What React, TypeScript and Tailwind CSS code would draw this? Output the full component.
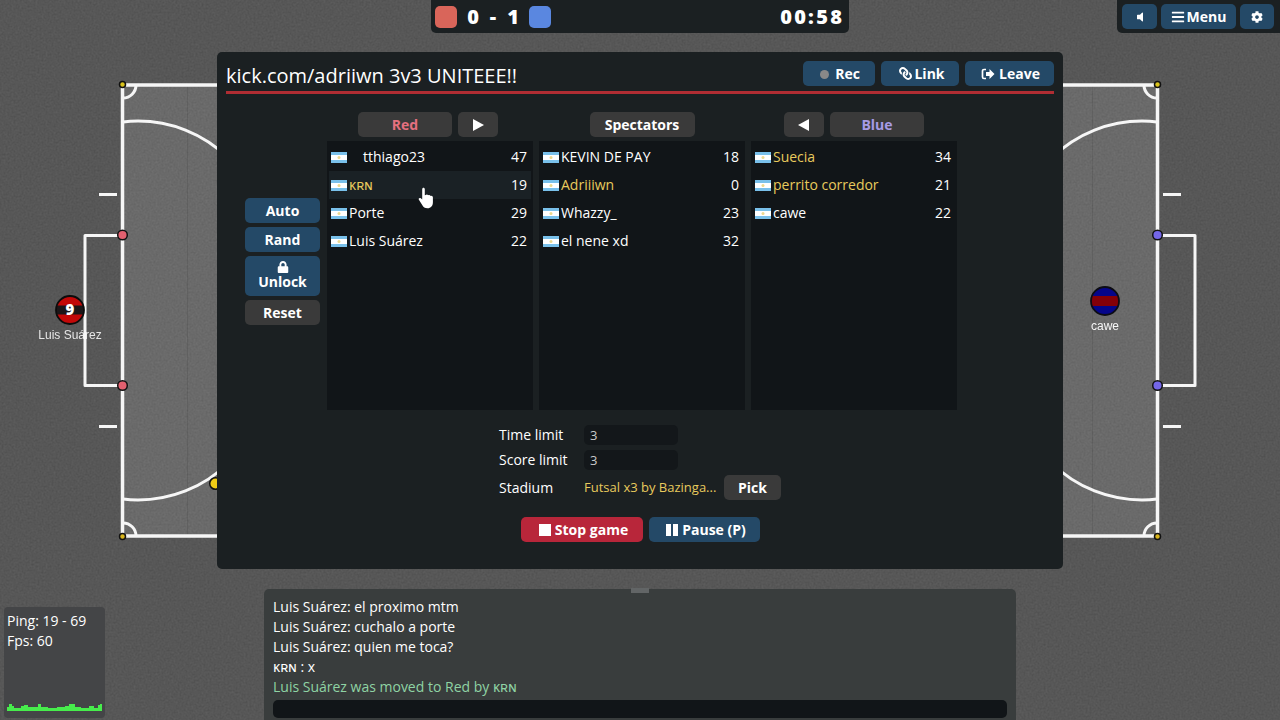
import { useState } from 'react'
import type { ReactNode } from 'react'
import { clsx } from 'clsx'
import { FaBars, FaCog, FaLink, FaLock, FaVolumeOff } from 'react-icons/fa'

interface Player {
  name: string
  ping: number
  admin?: boolean
  indent?: boolean
}

const redTeam: Player[] = [
  { name: 'tthiago23', ping: 47, indent: true },
  { name: 'ᴋʀɴ', ping: 19, admin: true },
  { name: 'Porte', ping: 29 },
  { name: 'Luis Suárez', ping: 22 },
]

const spectators: Player[] = [
  { name: 'KEVIN DE PAY', ping: 18 },
  { name: 'Adriiiwn', ping: 0, admin: true },
  { name: 'Whazzy_', ping: 23 },
  { name: 'el nene xd', ping: 32 },
]

const blueTeam: Player[] = [
  { name: 'Suecia', ping: 34, admin: true },
  { name: 'perrito corredor', ping: 21, admin: true },
  { name: 'cawe', ping: 22 },
]

const chatLines = [
  { text: 'Luis Suárez: el proximo mtm' },
  { text: 'Luis Suárez: cuchalo a porte' },
  { text: 'Luis Suárez: quien me toca?' },
  { text: 'ᴋʀɴ : x' },
  { text: 'Luis Suárez was moved to Red by ᴋʀɴ', notice: true },
]

const tones = {
  blue: 'bg-[#244967] text-white',
  gray: 'bg-[#3a3a3a] text-white',
  red: 'bg-[#b8263a] text-white',
  redTeam: 'bg-[#3a3a3a] text-[#e5707f]',
  blueTeam: 'bg-[#3a3a3a] text-[#a79be6]',
}

interface GameButtonProps {
  children: ReactNode
  tone?: keyof typeof tones
  className?: string
  label?: string
}

function GameButton({ children, tone = 'blue', className, label }: GameButtonProps) {
  return (
    <button
      type="button"
      aria-label={label}
      className={clsx(
        'flex min-h-[25px] items-center justify-center rounded-[5px] text-sm leading-[18px] font-bold whitespace-nowrap',
        tones[tone],
        className
      )}
    >
      {children}
    </button>
  )
}

function Flag() {
  return (
    <svg viewBox="0 0 16 11" className="h-[11px] w-4 shrink-0" aria-hidden="true">
      <rect width="16" height="11" fill="#79c0ea" />
      <rect y="3" width="16" height="5" fill="#fff" />
      <circle cx="8" cy="5.5" r="1.5" fill="#ecd98f" />
    </svg>
  )
}

function Pointer() {
  return (
    <svg viewBox="0 0 16 22" className="absolute top-4 left-[89px] z-10 h-[22px] w-4" aria-hidden="true">
      <path
        d="M4.2 2.2c0-2 2.6-2 2.6 0v6l.9-.2c.6-.9 2-.8 2.4.3.9-.7 2.1-.3 2.4.7 1.2-.5 2.4.3 2.4 1.6v4.600c0 3.600-2 6-5.400 6-2.700 0-4.100-1.100-5.300-3.200L.9 12.800c-.8-1.400.7-2.500 1.900-1.500l1.400 1.300z"
        fill="#fff"
      />
    </svg>
  )
}

function TeamList({ players, hovered }: { players: Player[]; hovered?: number }) {
  return (
    <ul className="h-[269px] bg-[#111518] px-0.5 pt-0.5">
      {players.map((player, i) => (
        <li
          key={player.name}
          className={clsx('relative flex h-7 items-center pr-1 pl-0.5', i === hovered && 'bg-[#1a2125]')}
        >
          <Flag />
          <span
            className={clsx(
              'flex-1',
              player.indent ? 'pl-4' : 'pl-0.5',
              player.admin ? 'text-[#e8ca5d]' : 'text-white'
            )}
          >
            {player.name}
          </span>
          <span>{player.ping}</span>
          {i === hovered && <Pointer />}
        </li>
      ))}
    </ul>
  )
}

function Pitch() {
  return (
    <svg
      viewBox="0 0 1280 720"
      preserveAspectRatio="xMidYMid slice"
      className="absolute inset-0 h-full w-full"
      aria-hidden="true"
    >
      <defs>
        <filter id="grain" x="0" y="0" width="100%" height="100%" colorInterpolationFilters="sRGB">
          <feTurbulence type="fractalNoise" baseFrequency="0.5" numOctaves="2" seed="4" />
          <feColorMatrix values="0.5 0.3 0 0 0 0.5 0.3 0 0 0 0.5 0.3 0 0 0 0 0 0 0 1" />
        </filter>
        <clipPath id="redDisc">
          <circle cx="70" cy="310" r="14" />
        </clipPath>
        <clipPath id="blueDisc">
          <circle cx="1105" cy="301" r="14" />
        </clipPath>
      </defs>

      <rect width="1280" height="720" fill="#555" />
      <rect x="122" y="85" width="1036" height="451" fill="#6b6b6b" />
      <path d="M187.5 86V535M1092.5 86V535" stroke="#606060" />
      <rect width="1280" height="720" filter="url(#grain)" opacity="0.12" />

      {/* lines */}
      <g fill="none" stroke="#f6f6f6" strokeWidth="3.5">
        <rect x="122.5" y="85" width="1035" height="451" />
        <path d="M136 85a13 13 0 0 1-13 13M1144 85a13 13 0 0 0 13 13M136 536a13 13 0 0 0-13-13M1144 536a13 13 0 0 1 13-13" strokeWidth="3" />
        <path d="M123 122Q130 121 138 121A129 129 0 0 1 267 250M123 499Q130 500 138 500A129 129 0 0 0 267 371" strokeWidth="3" />
        <path d="M1157 122Q1150 121 1142 121A129 129 0 0 0 1013 250M1157 499Q1150 500 1142 500A129 129 0 0 1 1013 371" strokeWidth="3" />
        <path d="M122 235.5H85V385.5H122M1158 235.5H1195V385.5H1158" strokeWidth="3" strokeLinejoin="round" />
        <path d="M99 194.5h18M99 426.5h18M1163 194.5h18M1163 426.5h18" strokeWidth="3" />
      </g>

      {/* posts, flags and ball */}
      <g stroke="#111" strokeWidth="1.5">
        <circle cx="122.5" cy="235" r="4.8" fill="#e2606f" />
        <circle cx="122.5" cy="385.5" r="4.8" fill="#e2606f" />
        <circle cx="1157.5" cy="235" r="4.8" fill="#7466e8" />
        <circle cx="1157.5" cy="385.5" r="4.8" fill="#7466e8" />
        <circle cx="122.5" cy="84.5" r="3" fill="#d9c21c" />
        <circle cx="1157.5" cy="84.5" r="3" fill="#d9c21c" />
        <circle cx="122.5" cy="536.5" r="3" fill="#d9b51c" />
        <circle cx="1157.5" cy="536.5" r="3" fill="#d9b51c" />
        <circle cx="215.5" cy="483.5" r="5.8" fill="#f0cb16" />
      </g>

      {/* players */}
      <g clipPath="url(#redDisc)">
        <rect x="56" y="296" width="28" height="28" fill="#c30808" />
        <rect x="56" y="305.5" width="28" height="9" fill="#1c1618" />
      </g>
      <circle cx="70" cy="310" r="14" fill="none" stroke="#0c0c0c" strokeWidth="1.8" />
      <g clipPath="url(#blueDisc)">
        <rect x="1091" y="287" width="28" height="28" fill="#05058a" />
        <rect x="1091" y="296" width="28" height="10" fill="#840008" />
      </g>
      <circle cx="1105" cy="301" r="14" fill="none" stroke="#0c0c14" strokeWidth="1.8" />
      <g textAnchor="middle" fill="#fff" fontFamily="'Liberation Sans', Arial, sans-serif">
        <text x="70" y="315" fontSize="15" fontWeight="800" fontFamily="'Open Sans', sans-serif">9</text>
        <text x="70" y="339" fontSize="12" opacity="0.85">Luis Suárez</text>
        <text x="1105" y="330" fontSize="12" opacity="0.95">cawe</text>
      </g>
    </svg>
  )
}

function Scoreboard() {
  return (
    <div className="flex h-[33px] items-center justify-between rounded-b-[5px] bg-[#1b2022] pr-1.5 pl-1 text-xl font-extrabold">
      <div className="flex items-center text-center">
        <span className="size-[22px] rounded-[5px] bg-[#d9655a]" />
        <span className="ml-2 w-4">0</span>
        <span className="w-6">-</span>
        <span className="w-4">1</span>
        <span className="ml-2 size-[22px] rounded-[5px] bg-[#5a87e0]" />
      </div>
      <div className="flex text-center">
        <span className="w-[14px]">0</span>
        <span className="w-[14px]">0</span>
        <span className="w-2">:</span>
        <span className="w-[14px]">5</span>
        <span className="w-[14px]">8</span>
      </div>
    </div>
  )
}

function RoomDialog() {
  const [timeLimit, setTimeLimit] = useState('3')
  const [scoreLimit, setScoreLimit] = useState('3')

  return (
    <main className="mx-auto mt-[19px] w-full max-w-[846px] rounded-[5px] bg-[#1b2022] px-[9px] pt-[9px] pb-[27px]">
      <header className="flex justify-between border-b-3 border-[#b02d33]">
        <h1 className="text-xl leading-[30px]">kick.com/adriiwn 3v3 UNITEEE!!</h1>
        <div className="flex items-start gap-1.5">
          <GameButton className="w-[72px] gap-1.5 pl-0.5">
            <span className="mt-0.5 size-[9px] rounded-full bg-[#888]" />
            Rec
          </GameButton>
          <GameButton className="w-[78px] gap-0.5 pl-1">
            <FaLink className="size-[13px] -scale-x-100" />
            Link
          </GameButton>
          <GameButton className="w-[89px] gap-1 pl-0.5">
            <svg viewBox="0 0 14 12" className="h-3 w-[14px]" aria-hidden="true">
              <path d="M5 1.5H3A1.5 1.5 0 0 0 1.5 3v6A1.5 1.5 0 0 0 3 10.5h2" fill="none" stroke="#fff" strokeWidth="1.7" />
              <path d="M5 4h3.500V1L13.500 6l-5 5V8H5z" fill="#fff" />
            </svg>
            Leave
          </GameButton>
        </div>
      </header>

      <div className="mt-[18px] flex gap-[7px]">
        <div className="flex w-[94px] shrink-0 flex-col gap-1 pt-[86px] pl-[19px]">
          <GameButton>Auto</GameButton>
          <GameButton>Rand</GameButton>
          <GameButton className="h-10 flex-col leading-[14px]">
            <FaLock className="size-3" />
            Unlock
          </GameButton>
          <GameButton tone="gray">Reset</GameButton>
        </div>

        <div className="mr-[97px] grid flex-1 grid-cols-3 gap-1.5">
          <section>
            <div className="mb-1 flex justify-center gap-1.5 pr-1">
              <GameButton tone="redTeam" className="w-[94px]">Red</GameButton>
              <GameButton tone="gray" className="w-10" label="Move to red">
                <svg viewBox="0 0 12 12" className="size-3" aria-hidden="true">
                  <path d="M1 0L12 6L1 12z" fill="#fff" />
                </svg>
              </GameButton>
            </div>
            <TeamList players={redTeam} hovered={1} />
          </section>
          <section>
            <div className="mb-1 flex justify-center">
              <GameButton tone="gray" className="w-[105px]">Spectators</GameButton>
            </div>
            <TeamList players={spectators} />
          </section>
          <section>
            <div className="mb-1 flex justify-center gap-1.5">
              <GameButton tone="gray" className="w-10" label="Move to blue">
                <svg viewBox="0 0 12 12" className="size-3" aria-hidden="true">
                  <path d="M11 0L0 6L11 12z" fill="#fff" />
                </svg>
              </GameButton>
              <GameButton tone="blueTeam" className="w-[94px]">Blue</GameButton>
            </div>
            <TeamList players={blueTeam} />
          </section>
        </div>
      </div>

      <div className="mx-auto mt-[15px] grid w-fit grid-cols-[85px_auto] items-center gap-y-[5px]">
        <label htmlFor="time-limit">Time limit</label>
        <input
          id="time-limit"
          value={timeLimit}
          onChange={(e) => setTimeLimit(e.target.value)}
          className="h-5 w-[94px] rounded-[5px] bg-[#13171a] px-1.5 text-[13px] text-[#c8cacb]"
        />
        <label htmlFor="score-limit">Score limit</label>
        <input
          id="score-limit"
          value={scoreLimit}
          onChange={(e) => setScoreLimit(e.target.value)}
          className="h-5 w-[94px] rounded-[5px] bg-[#13171a] px-1.5 text-[13px] text-[#c8cacb]"
        />
        <span>Stadium</span>
        <div className="flex items-center">
          <span className="w-[140px] text-[13px] whitespace-nowrap text-[#e8ca5d]">Futsal x3 by Bazinga...</span>
          <GameButton tone="gray" className="w-[57px]">Pick</GameButton>
        </div>
      </div>

      <div className="mt-[17px] flex justify-center gap-1.5">
        <GameButton tone="red" className="w-[122px] gap-1 pl-1">
          <span className="size-3 bg-white" />
          Stop game
        </GameButton>
        <GameButton className="w-[111px] gap-1 pl-1">
          <span className="flex gap-0.5">
            <span className="h-3 w-[5px] bg-white" />
            <span className="h-3 w-[5px] bg-white" />
          </span>
          Pause (P)
        </GameButton>
      </div>
    </main>
  )
}

function ChatBox() {
  const [message, setMessage] = useState('')

  return (
    <section className="relative rounded-t-[5px] bg-[#393d3d] px-[9px] pt-2 pb-0.5">
      <span className="absolute -top-px left-1/2 h-[5px] w-[18px] -translate-x-1/2 bg-[#626566]" />
      {chatLines.map((line) => (
        <p key={line.text} className={clsx('leading-5', line.notice ? 'text-[#8fd3a4]' : 'text-white')}>
          {line.text}
        </p>
      ))}
      <input
        aria-label="Chat message"
        value={message}
        onChange={(e) => setMessage(e.target.value)}
        className="mt-[3px] block h-[18px] w-full rounded-[5px] bg-[#111518] px-1.5 text-[13px]"
      />
    </section>
  )
}

function NetStats() {
  return (
    <aside className="mb-0.5 ml-1 h-[111px] w-[101px] self-end rounded-sm bg-[#444547] px-[3px] pt-1">
      <p className="leading-5">Ping: 19 - 69</p>
      <p className="leading-5">Fps: 60</p>
      <svg viewBox="0 0 95 8" className="mt-[52px] h-2 w-[95px]" aria-hidden="true">
        <path
          d="M0 8V4H2V1H5V3H7V5H14V3H17V2H21V4H31V1H34V4H41V5H50V4H58V3H62V1H68V4H74V5H82V3H87V5H91V2H93V1H95V8z"
          fill="#47ec4c"
        />
      </svg>
    </aside>
  )
}

export default function App() {
  return (
    <div className="relative min-h-screen overflow-hidden bg-[#555] font-['Open_Sans','Noto_Sans',sans-serif] text-sm text-white">
      <Pitch />
      <div className="relative flex min-h-screen flex-col">
        <div className="grid grid-cols-[1fr_418px_1fr] items-start">
          <div />
          <Scoreboard />
          <nav className="flex h-[33px] items-center gap-1 justify-self-end rounded-bl-[5px] bg-[#1b2022] pr-1.5 pl-[5px]">
            <GameButton className="w-[35px]" label="Sound">
              <FaVolumeOff className="size-3" />
            </GameButton>
            <GameButton className="w-[75px] gap-0.5">
              <FaBars className="size-[14px]" />
              Menu
            </GameButton>
            <GameButton className="w-[34px]" label="Settings">
              <FaCog className="size-3" />
            </GameButton>
          </nav>
        </div>

        <RoomDialog />

        <div className="mt-auto grid grid-cols-[1fr_752px_1fr]">
          <NetStats />
          <ChatBox />
          <div />
        </div>
      </div>
    </div>
  )
}
